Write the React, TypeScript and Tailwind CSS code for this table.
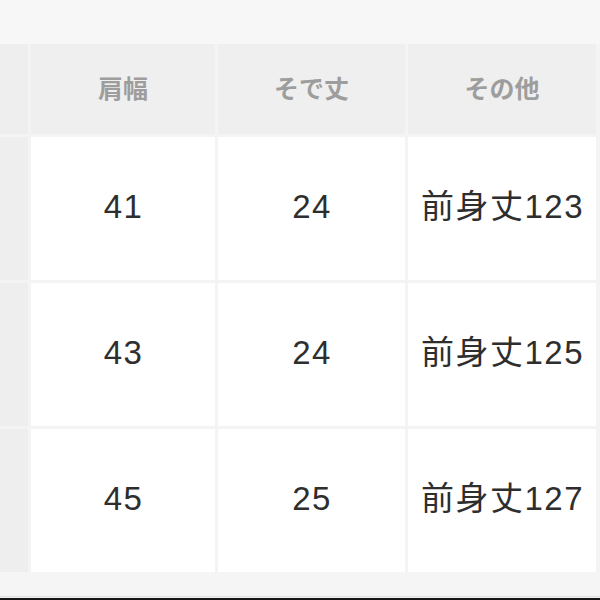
import React from "react";

const headers = ["肩幅", "そで丈", "その他"];
const rows = [
  ["41", "24", "前身丈123"],
  ["43", "24", "前身丈125"],
  ["45", "25", "前身丈127"],
];

const font = { fontFamily: '"Liberation Sans", "Noto Sans CJK JP", sans-serif' };

const App = () => {
  return (
    <div
      className="w-[600px] h-[600px] bg-[#f7f7f7] flex flex-col overflow-hidden"
      style={font}
    >
      <div className="h-[44px] shrink-0" />
      <div className="grid grid-cols-[28px_184px_187px_188px_1fr] grid-rows-[90px_143px_143px_143px] gap-[3px] bg-[#f4f4f4]">
        <div className="bg-[#eeeeee]" />
        {headers.map((h) => (
          <div
            key={h}
            className="bg-[#efefef] flex items-center justify-center text-[25px] font-bold text-[#9d9d9d] leading-none"
          >
            {h}
          </div>
        ))}
        <div className="bg-[#f3f3f3]" />
        {rows.map((r, i) => (
          <React.Fragment key={i}>
            <div className="bg-[#eeeeee]" />
            {r.map((c, j) => (
              <div
                key={j}
                className="bg-white flex items-center justify-center text-[33px] text-[#2e2e2e] leading-none tracking-[1.5px] pb-[4px] pl-[1px]"
              >
                {c}
              </div>
            ))}
            <div className="bg-[#f3f3f3]" />
          </React.Fragment>
        ))}
      </div>
      <div className="flex-1 bg-[#f5f5f5]" />
      <div className="h-px bg-[#e2e2e2]" />
      <div className="h-px bg-[#f0f0f0]" />
      <div className="h-[2px] bg-[#151515]" />
    </div>
  );
};

export default App;
